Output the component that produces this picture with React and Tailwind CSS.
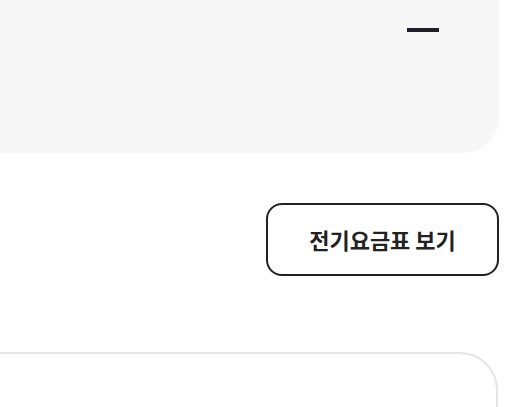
import React from "react";

const App = () => {
    return (
        <div
            className="w-[525px] h-[407px] overflow-hidden bg-white"
            style={{ fontFamily: '"Noto Sans CJK KR", "Noto Sans", sans-serif' }}
        >
            {/* summary panel */}
            <div className="-mt-10 -ml-10 mr-[26px] h-[193px] rounded-[36px] bg-[#f7f7f7] flex justify-end pr-[60px] pt-[68px]">
                <div className="w-8 h-1 bg-[#1f1f27]"></div>
            </div>

            {/* rate table button */}
            <div className="flex justify-end pr-[26px] mt-[50px]">
                <button className="w-[233px] h-[73px] rounded-[16px] border-2 border-[#222222] bg-white text-[22px] font-bold text-[#222222] flex items-center justify-center">
                    전기요금표 보기
                </button>
            </div>

            {/* next card */}
            <div className="-ml-10 mr-[27px] mt-[76px] h-[120px] rounded-[38px] border-2 border-[#e3e5e9] bg-white"></div>
        </div>
    );
};

export default App;
